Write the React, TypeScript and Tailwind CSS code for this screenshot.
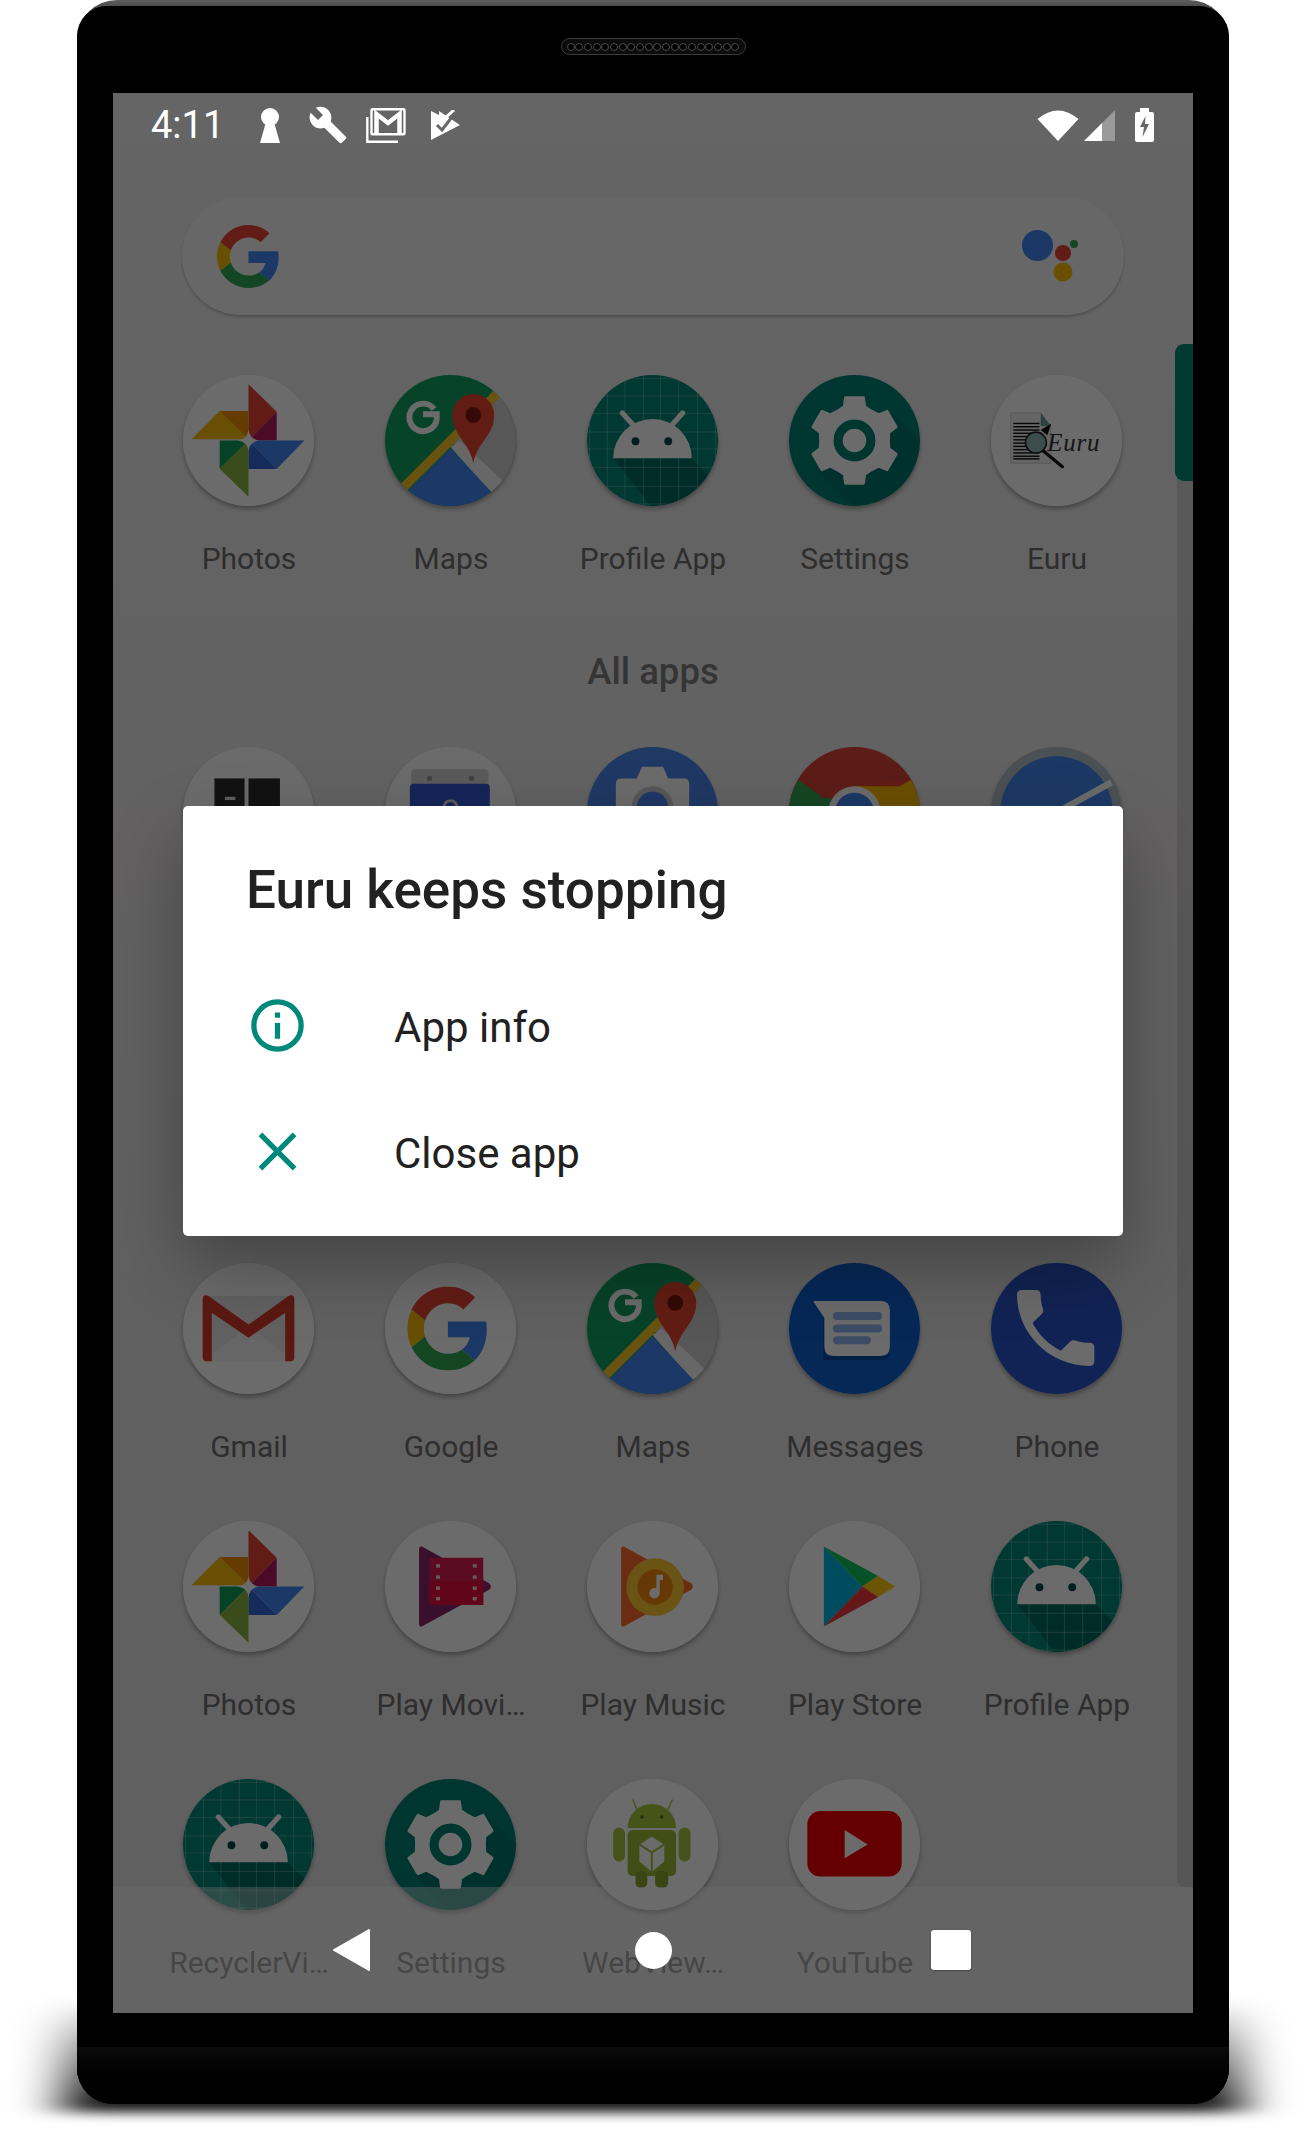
import React from "react";

type IconProps = { children: React.ReactNode };

const Svg = ({ children }: IconProps) => (
  <svg viewBox="0 0 100 100" className="block h-full w-full">
    {children}
  </svg>
);

const Disc = ({ fill = "#ffffff" }: { fill?: string }) => <circle cx="50" cy="50" r="50" fill={fill} />;

function GMark({ x, y, w, h }: { x: number; y: number; w: number; h: number }) {
  return (
    <svg x={x} y={y} width={w} height={h} viewBox="0 0 48 48" preserveAspectRatio="none">
      <path fill="#EA4335" d="M24 9.5c3.54 0 6.71 1.22 9.21 3.6l6.85-6.85C35.9 2.38 30.47 0 24 0 14.62 0 6.51 5.38 2.56 13.22l7.98 6.19C12.43 13.72 17.74 9.5 24 9.5z" />
      <path fill="#4285F4" d="M46.98 24.55c0-1.57-.15-3.09-.38-4.55H24v9.02h12.94c-.58 2.96-2.26 5.48-4.78 7.18l7.73 6c4.51-4.18 7.09-10.36 7.09-17.65z" />
      <path fill="#FBBC05" d="M10.53 28.59c-.5-1.45-.78-2.99-.78-4.59s.27-3.14.78-4.59l-7.98-6.19C.92 16.46 0 20.12 0 24c0 3.88.92 7.54 2.56 10.78l7.97-6.19z" />
      <path fill="#34A853" d="M24 48c6.48 0 11.93-2.13 15.89-5.81l-7.73-6c-2.15 1.45-4.92 2.3-8.16 2.3-6.26 0-11.57-4.22-13.47-9.91l-7.98 6.19C6.51 42.62 14.62 48 24 48z" />
    </svg>
  );
}

const Photos = () => (
  <Svg>
    <Disc />
    <polygon points="50,7 71.5,28 50,50" fill="#ea4335" />
    <polygon points="71.5,28 71.5,50 50,50" fill="#b31b5e" />
    <polygon points="6.6,49 28,27.5 50,49" fill="#fbbc05" />
    <polygon points="28,27.5 50,27.5 50,49" fill="#ef8f00" />
    <polygon points="50,50 92.6,50 71.5,71.8" fill="#4285f4" />
    <polygon points="50,50 71.5,71.8 50,71.8" fill="#3367d6" />
    <polygon points="28,50 50,50 28,71.5" fill="#0f9d58" />
    <polygon points="50,50 28,71.5 50,93" fill="#8bb543" />
    <path d="M50 42 Q51 49 58 50 Q51 51 50 58 Q49 51 42 50 Q49 49 50 42Z" fill="#ffffff" />
  </Svg>
);

const Maps = () => (
  <Svg>
    <defs>
      <clipPath id="mapclip">
        <circle cx="50" cy="50" r="50" />
      </clipPath>
    </defs>
    <g clipPath="url(#mapclip)">
      <rect width="100" height="100" fill="#12a05f" />
      <polygon points="86,8 110,8 110,110 50,50" fill="#cfcfcf" />
      <polygon points="50,55 57,50 90,81 81,90" fill="#f6f6f6" />
      <polygon points="50,56 17,89 50,110 82,90" fill="#4285f4" />
      <line x1="88" y1="12" x2="12" y2="88" stroke="#f9c528" strokeWidth="7" />
      <path d="M37.5 26 A10.5 10.5 0 1 0 39.5 34 L39.5 30 L29 30" fill="none" stroke="#ffffff" strokeWidth="4.5" />
      <path d="M67.4 67.5 C65 52 51.4 46 51.4 30.5 A16 16 0 1 1 83.4 30.5 C83.4 46 70 52 67.4 67.5Z" fill="#e8452f" />
      <circle cx="67.4" cy="30.5" r="6" fill="#7a1a0c" />
    </g>
  </Svg>
);

const AndroidApp = () => (
  <Svg>
    <defs>
      <clipPath id="droidclip">
        <circle cx="50" cy="50" r="50" />
      </clipPath>
    </defs>
    <g clipPath="url(#droidclip)">
      <rect width="100" height="100" fill="#008577" />
      <polygon points="20,63.6 80,63.6 112,96 76,112 58,112" fill="#000000" fillOpacity="0.2" />
      {[2, 15.5, 29, 43, 56, 70, 84.5, 98].map((p) => (
        <g key={p} stroke="#ffffff" strokeOpacity="0.3" strokeWidth="0.7">
          <line x1={p} y1="0" x2={p} y2="100" />
          <line x1="0" y1={p + 0.5} x2="100" y2={p + 0.5} />
        </g>
      ))}
      <line x1="37" y1="40" x2="27" y2="29" stroke="#ffffff" strokeWidth="4" strokeLinecap="round" />
      <line x1="63" y1="40" x2="73" y2="29" stroke="#ffffff" strokeWidth="4" strokeLinecap="round" />
      <path d="M20 63.6 A30 30 0 0 1 80 63.6 Z" fill="#ffffff" />
      <circle cx="37" cy="50.6" r="3" fill="#004b43" />
      <circle cx="62" cy="50.6" r="3" fill="#004b43" />
    </g>
  </Svg>
);

function gearPath() {
  const pts: string[] = [];
  const p = (deg: number, r: number) => {
    const a = (deg * Math.PI) / 180;
    return `${(50 + r * Math.cos(a)).toFixed(2)} ${(50 + r * Math.sin(a)).toFixed(2)}`;
  };
  for (let i = 0; i < 6; i++) {
    const a = i * 60 - 90;
    pts.push(p(a - 30, 26), p(a - 17, 27), p(a - 12, 33.5), p(a + 12, 33.5), p(a + 17, 27));
  }
  return `M${pts.join(" L")} Z`;
}

const Settings = () => (
  <Svg>
    <defs>
      <clipPath id="gearclip">
        <circle cx="50" cy="50" r="50" />
      </clipPath>
    </defs>
    <g clipPath="url(#gearclip)">
      <rect width="100" height="100" fill="#008074" />
      <polygon points="80,30 112,62 112,112 62,112 22,74" fill="#000000" fillOpacity="0.08" />
    </g>
    <path d={gearPath()} fill="#ffffff" stroke="#ffffff" strokeWidth="2" strokeLinejoin="round" />
    <circle cx="50" cy="50" r="12.5" fill="#ffffff" stroke="#008074" strokeWidth="7" />
  </Svg>
);

const Euru = () => (
  <Svg>
    <Disc />
    <polygon points="15,29 38,29 45.6,39 45.6,67.4 15,67.4" fill="#f0f0f0" stroke="#c9c9c9" strokeWidth="0.6" />
    <polygon points="38,29 45.6,39 38,39" fill="#6a9c9a" />
    {[37, 39.5, 42, 44.5, 47, 49.5, 52, 54.5, 57, 59.5, 62, 64].map((y) => (
      <line key={y} x1="17" y1={y} x2="37" y2={y} stroke="#111111" strokeWidth="1.1" />
    ))}
    <circle cx="34.3" cy="51.6" r="8" fill="#8fb9b6" stroke="#222222" strokeWidth="1.2" />
    <line x1="40" y1="58" x2="54.5" y2="70" stroke="#111111" strokeWidth="2.4" strokeLinecap="round" />
    <polygon points="38,42 46,37 43,46" fill="#111111" />
    <text x="43" y="58" fontFamily="'Liberation Serif', serif" fontStyle="italic" fontSize="19" fill="#333333" letterSpacing="0.6">
      Euru
    </text>
  </Svg>
);

const Calculator = () => (
  <Svg>
    <Disc />
    <rect x="24" y="24" width="23" height="50" fill="#2b2b2b" />
    <rect x="50" y="24" width="24" height="50" fill="#2b2b2b" />
    <rect x="32" y="38" width="8" height="2.5" fill="#e0e0e0" />
  </Svg>
);

const Calendar = () => (
  <Svg>
    <Disc />
    <rect x="20" y="17" width="59" height="16" rx="3" fill="#d6d6d6" />
    <circle cx="34" cy="24" r="2" fill="#9a9a9a" />
    <circle cx="66" cy="24" r="2" fill="#9a9a9a" />
    <rect x="19" y="28" width="61" height="52" rx="3" fill="#3158d1" />
    <circle cx="50" cy="46" r="5" fill="none" stroke="#d6d6d6" strokeWidth="2.4" />
  </Svg>
);

const Camera = () => (
  <Svg>
    <Disc fill="#4a86ee" />
    <path d="M38 24 L42 15 H58 L62 24 H74 Q78 24 78 28 V70 H22 V28 Q22 24 26 24 Z" fill="#ffffff" />
    <circle cx="50" cy="46" r="14" fill="#4a86ee" stroke="#d0d0d0" strokeWidth="4" />
  </Svg>
);

const Chrome = () => (
  <Svg>
    <Disc fill="#ea4335" />
    <path d="M50 50 L93 25 A50 50 0 0 1 100 50 Z M50 30 H93 L100 50 L50 60Z" fill="#fbbc05" />
    <path d="M50 50 L7 25 A50 50 0 0 0 0 50 L0 70 L40 70Z" fill="#34a853" />
    <path d="M7 25 A50 50 0 0 1 93 25 L50 30 Q35 30 28 40Z" fill="#db4437" />
    <circle cx="50" cy="50" r="20" fill="#ffffff" />
    <circle cx="50" cy="50" r="15" fill="#4285f4" />
  </Svg>
);

const Clock = () => (
  <Svg>
    <Disc fill="#b0bec5" />
    <circle cx="50" cy="50" r="43" fill="#4488f0" />
    <line x1="50" y1="50" x2="92" y2="27" stroke="#ffffff" strokeWidth="5" />
  </Svg>
);

const Gmail = () => (
  <Svg>
    <Disc />
    <rect x="15" y="25" width="70" height="50" rx="3" fill="#e8e8e8" />
    <polygon points="15,75 50,48 85,75" fill="#f2f2f2" />
    <path d="M15 72 V28 Q15 23 20 25.5 L50 47 L80 25.5 Q85 23 85 28 V72 Q85 75 82 75 H78 V38 L50 57 L22 38 V75 H18 Q15 75 15 72Z" fill="#d93a2d" />
  </Svg>
);

const Google = () => (
  <Svg>
    <Disc />
    <GMark x={17} y={18} w={62} h={64} />
  </Svg>
);

const Messages = () => (
  <Svg>
    <Disc fill="#0f5fd0" />
    <path d="M26 74 H70 Q77 74 77 67 V40 H26Z" fill="#000000" fillOpacity="0.22" />
    <path d="M19 29 H70 Q77 29 77 36 V64 Q77 71 70 71 H34 Q27 71 27 64 V42 L21 33 Q18 29 19 29Z" fill="#ffffff" />
    <rect x="33.5" y="37.5" width="37.5" height="6" rx="3" fill="#8fb8f0" />
    <rect x="33.5" y="47" width="37.5" height="6" rx="3" fill="#8fb8f0" />
    <rect x="33.5" y="56" width="29" height="6" rx="3" fill="#8fb8f0" />
  </Svg>
);

const PhoneApp = () => (
  <Svg>
    <Disc fill="#2a55c8" />
    <g transform="translate(10 11) scale(3.28 3.22)">
      <path fill="#ffffff" d="M6.62 10.79c1.44 2.83 3.76 5.14 6.59 6.59l2.2-2.2c.27-.27.67-.36 1.02-.24 1.12.37 2.33.57 3.57.57.55 0 1 .45 1 1V20c0 .55-.45 1-1 1-9.39 0-17-7.61-17-17 0-.55.45-1 1-1h3.5c.55 0 1 .45 1 1 0 1.25.2 2.45.57 3.57.11.35.03.74-.25 1.02l-2.2 2.2z" />
    </g>
  </Svg>
);

const PLAY = "M28 19.5 L79.5 47.5 Q82 50 79.5 52.5 L28 80.5 Q26 81 26 78 V22 Q26 19 28 19.5Z";

const PlayMovies = () => (
  <Svg>
    <Disc />
    <path d={PLAY} fill="#8a2466" />
    <polygon points="34,28 75,28 75,64 34,64" fill="#d81b52" />
    <rect x="34" y="46" width="41" height="18" fill="#e80d42" />
    {[33, 41.5, 50, 58].map((y) => (
      <g key={y} fill="#f6d6df">
        <rect x="39" y={y} width="3" height="2.6" />
        <rect x="67" y={y} width="3" height="2.6" />
      </g>
    ))}
  </Svg>
);

const PlayMusic = () => (
  <Svg>
    <Disc />
    <path d={PLAY} fill="#ff6a2c" />
    <circle cx="52" cy="50.4" r="22" fill="#fbc734" />
    <circle cx="52" cy="50.4" r="13.5" fill="#f2860c" />
    <path d="M53 41 H58 V45 H55.5 V55 A4 4 0 1 1 53 51.4Z" fill="#ffffff" />
  </Svg>
);

const PlayStore = () => (
  <Svg>
    <Disc />
    <polygon points="26.6,19.5 56,50 26.6,80.5" fill="#00b5e2" />
    <polygon points="26.6,19.5 68,42 56,50" fill="#10c45c" />
    <polygon points="68,42 81,50 68,58 56,50" fill="#ffc90a" />
    <polygon points="26.6,80.5 56,50 68,58" fill="#f0383f" />
  </Svg>
);

const WebView = () => (
  <Svg>
    <Disc />
    <g stroke="#b0cc40" strokeLinecap="round">
      <line x1="38" y1="23" x2="35" y2="16" strokeWidth="1.2" />
      <line x1="62" y1="23" x2="65" y2="16" strokeWidth="1.2" />
    </g>
    <path d="M31 37.5 A18.5 18.5 0 0 1 68 37.5Z" fill="#aac83c" />
    <rect x="31" y="39" width="37" height="35" rx="4" fill="#9fbb38" />
    <rect x="20" y="37" width="9" height="26" rx="4.5" fill="#a6c43c" />
    <rect x="70" y="37" width="9" height="26" rx="4.5" fill="#a6c43c" />
    <rect x="37" y="70" width="9" height="13" rx="4" fill="#8aa52e" />
    <rect x="52" y="70" width="10" height="13" rx="4" fill="#8aa52e" />
    <circle cx="42" cy="29" r="1.4" fill="#5a7018" />
    <circle cx="57" cy="29" r="1.4" fill="#5a7018" />
    <polygon points="49.5,44 59,50 59,63 49.5,71 40,63 40,50" fill="#ffffff" />
    <path d="M40 50 L49.5 56 L59 50 M49.5 56 V71" fill="none" stroke="#9fbb38" strokeWidth="1.4" />
  </Svg>
);

const YouTube = () => (
  <Svg>
    <Disc />
    <rect x="14" y="24.5" width="72" height="50" rx="10" fill="#ee0000" />
    <polygon points="42.5,39 60,50 42.5,60.5" fill="#ffffff" />
  </Svg>
);

function Cell({ icon, label }: { icon: React.ReactNode; label?: string }) {
  return (
    <div className="flex h-[258px] w-[202px] flex-col items-center">
      <div className="h-[131px] w-[131px] rounded-full shadow-[0_3px_4px_rgba(0,0,0,0.3)]">{icon}</div>
      {label ? (
        <div className="mt-[32px] whitespace-nowrap pl-[2px] text-center text-[30px] leading-[42px] text-[#6e6e6e]">{label}</div>
      ) : null}
    </div>
  );
}

const Row = ({ children }: IconProps) => <div className="flex">{children}</div>;

function StatusBar() {
  return (
    <div className="relative z-20 flex h-[64px] items-center pl-[38px] pr-[39px] text-white">
      <span className="w-[109px] text-[38px] leading-none">4:11</span>
      <svg width="20" height="35" viewBox="0 0 20 35" fill="#ffffff">
        <circle cx="10" cy="9" r="9" />
        <path d="M6 14 L0 35 H20 L14 14Z" />
      </svg>
      <svg className="ml-[28px]" width="40" height="40" viewBox="0 0 24 24" fill="#ffffff">
        <path d="M22.7 19l-9.1-9.1c.9-2.3.4-5-1.5-6.9-2-2-5-2.4-7.4-1.3L9 6 6 9 1.6 4.7C.4 7.1.9 10.1 2.9 12.1c1.9 1.9 4.6 2.4 6.9 1.5l9.1 9.1c.4.4 1 .4 1.4 0l2.3-2.3c.5-.4.5-1.1.1-1.4z" />
      </svg>
      <svg className="ml-[18px]" width="40" height="35" viewBox="0 0 40 35" fill="none" stroke="#ffffff">
        <rect x="5.5" y="1.2" width="33" height="25" rx="1" strokeWidth="2.4" />
        <path d="M10.5 25 V6 L22 15 L33.5 6 V25" strokeWidth="4.5" />
        <path d="M1.3 9 V33.7 H32" strokeWidth="2.4" />
      </svg>
      <svg className="ml-[25px]" width="29" height="30" viewBox="0 0 29 30">
        <polygon points="0,1 8,5 8,1 29,15 0,30" fill="#ffffff" />
        <path d="M6 15 L11 20 L21 7" fill="none" stroke="#686868" strokeWidth="3" />
        <path d="M14 8 L23 0" fill="none" stroke="#ffffff" strokeWidth="3" />
      </svg>
      <svg className="ml-auto" width="42" height="31" viewBox="0 0 41 31" fill="#ffffff">
        <path d="M0 9 Q20.5 -8 41 9 L20.5 31Z" />
      </svg>
      <svg className="ml-[5px]" width="31" height="31" viewBox="0 0 31 31">
        <polygon points="0,31 18,31 18,13" fill="#ffffff" />
        <polygon points="18,13 31,0 31,31 18,31" fill="#ffffff" fillOpacity="0.35" />
      </svg>
      <svg className="ml-[20px]" width="19" height="34" viewBox="0 0 19 34">
        <path d="M5 0 H14 V4 H17 Q19 4 19 6 V32 Q19 34 17 34 H2 Q0 34 0 32 V6 Q0 4 2 4 H5Z" fill="#ffffff" />
        <polygon points="10.5,8 5,19 9,19 7.5,29 14,16 10,16" fill="#686868" />
      </svg>
    </div>
  );
}

function SearchBar() {
  return (
    <div className="ml-[69px] mr-[69px] mt-[40px] flex h-[118px] items-center justify-between rounded-full bg-white/40 pl-[35px] pr-[46px] shadow-[0_2px_3px_rgba(0,0,0,0.22)]">
      <svg width="63" height="63" viewBox="0 0 100 100">
        <GMark x={0} y={0} w={100} h={100} />
      </svg>
      <svg width="56" height="52" viewBox="0 0 56 52">
        <ellipse cx="15.5" cy="15.5" rx="15.5" ry="15.5" fill="#4285f4" />
        <circle cx="41" cy="23" r="8" fill="#ea4335" />
        <circle cx="52" cy="14" r="4" fill="#34a853" />
        <circle cx="41" cy="42" r="9.5" fill="#fbbc05" />
      </svg>
    </div>
  );
}

function Launcher() {
  return (
    <div className="flex-1">
      <StatusBar />
      <SearchBar />
      <div className="pl-[34px] pt-[60px]">
        <Row>
          <Cell icon={<Photos />} label="Photos" />
          <Cell icon={<Maps />} label="Maps" />
          <Cell icon={<AndroidApp />} label="Profile App" />
          <Cell icon={<Settings />} label="Settings" />
          <Cell icon={<Euru />} label="Euru" />
        </Row>
        <div className="h-[114px] w-[1010px] pl-[2px] pt-[18px] text-center text-[36.5px] font-medium leading-[42px] text-[#7e7e7e]">All apps</div>
        <Row>
          <Cell icon={<Calculator />} />
          <Cell icon={<Calendar />} />
          <Cell icon={<Camera />} />
          <Cell icon={<Chrome />} />
          <Cell icon={<Clock />} />
        </Row>
        <div className="h-[258px]" />
        <Row>
          <Cell icon={<Gmail />} label="Gmail" />
          <Cell icon={<Google />} label="Google" />
          <Cell icon={<Maps />} label="Maps" />
          <Cell icon={<Messages />} label="Messages" />
          <Cell icon={<PhoneApp />} label="Phone" />
        </Row>
        <Row>
          <Cell icon={<Photos />} label="Photos" />
          <Cell icon={<PlayMovies />} label="Play Movi…" />
          <Cell icon={<PlayMusic />} label="Play Music" />
          <Cell icon={<PlayStore />} label="Play Store" />
          <Cell icon={<AndroidApp />} label="Profile App" />
        </Row>
        <Row>
          <Cell icon={<AndroidApp />} label="RecyclerVi…" />
          <Cell icon={<Settings />} label="Settings" />
          <Cell icon={<WebView />} label="WebView…" />
          <Cell icon={<YouTube />} label="YouTube" />
        </Row>
      </div>
    </div>
  );
}

function Dialog() {
  return (
    <div className="absolute left-[70px] top-[713px] z-30 h-[430px] w-[940px] rounded-[5px] bg-white pl-[63px] pt-[49px] text-[#212121] shadow-[0_30px_70px_rgba(0,0,0,0.3)]">
      <div className="text-[53px] font-medium leading-[70px]">Euru keeps stopping</div>
      <div className="mt-[37px] flex h-[126px] items-center">
        <svg width="63" height="63" viewBox="0 0 24 24" fill="none" stroke="#00897b" strokeWidth="2">
          <circle cx="12" cy="12" r="9" />
          <path d="M12 11 V17 M12 7 V9" />
        </svg>
        <span className="ml-[85px] mt-[5px] text-[42px] leading-[56px]">App info</span>
      </div>
      <div className="flex h-[126px] items-center">
        <svg width="63" height="63" viewBox="0 0 24 24" fill="none" stroke="#00897b" strokeWidth="2">
          <path d="M5.5 5.5 L18.5 18.5 M18.5 5.5 L5.5 18.5" />
        </svg>
        <span className="ml-[85px] mt-[5px] text-[42px] leading-[56px]">Close app</span>
      </div>
    </div>
  );
}

function NavIcons() {
  return (
    <div className="absolute bottom-0 left-0 right-0 z-20 flex h-[126px] items-center justify-center text-white">
      <div className="flex w-[300px] justify-center pr-[3px]">
        <svg width="37" height="42" viewBox="0 0 37 42" fill="#ffffff" stroke="#ffffff" strokeWidth="2" strokeLinejoin="round">
          <polygon points="36,1 1,21 36,41" />
        </svg>
      </div>
      <div className="flex w-[300px] justify-center">
        <div className="h-[37px] w-[37px] rounded-full bg-white" />
      </div>
      <div className="flex w-[300px] justify-center pr-[4px]">
        <div className="h-[40px] w-[40px] rounded-[3px] bg-white shadow-[0_1px_2px_rgba(0,0,0,0.3)]" />
      </div>
    </div>
  );
}

function Screen() {
  return (
    <div className="relative mt-[38px] flex h-[1920px] w-[1080px] flex-col overflow-hidden bg-linear-to-b from-[#f2f0f1] via-[#e9e6e7] to-[#e4e4e6] font-['Roboto',sans-serif]">
      <Launcher />
      <div className="absolute right-0 top-[251px] h-[1543px] w-[16px] rounded-bl-[8px] bg-black/10" />
      <div className="absolute right-0 top-[251px] h-[137px] w-[18px] rounded-l-[9px] bg-[#008577]" />
      <div className="absolute bottom-0 left-0 right-0 h-[126px] bg-white/40" />
      <div className="absolute inset-0 z-10 bg-black/[0.58]" />
      <Dialog />
      <NavIcons />
    </div>
  );
}

export default function App() {
  return (
    <div className="relative h-[2130px] w-[1305px] overflow-hidden bg-white">
      <div className="absolute left-[505px] top-[2000px] h-[112px] w-[295px] scale-x-[4] bg-linear-to-b from-transparent to-black blur-[6px]" />
      <div className="relative ml-[77px] h-[2104px] w-[1152px] rounded-t-[40px] rounded-b-[36px] bg-[linear-gradient(to_bottom,#5e5e5e_0px,#4c4c4c_6px,#1c1c1c_26px,#000000_44px)] pt-[6px]">
        <div className="flex h-[2098px] flex-col items-center rounded-t-[30px] rounded-b-[36px] bg-black">
          <div className="mt-[32px] flex h-[17px] w-[185px] items-center justify-between rounded-full border border-[#3c3c3c] bg-[#0c0c0c] px-[5px]">
            {Array.from({ length: 20 }).map((_, i) => (
              <span key={i} className="h-[8px] w-[8px] rounded-full border border-[#4a4a4a] bg-black" />
            ))}
          </div>
          <Screen />
          <div className="mt-[34px] flex-1 self-stretch rounded-b-[36px] bg-linear-to-b from-[#0b0b0b] to-black" />
        </div>
      </div>
    </div>
  );
}
